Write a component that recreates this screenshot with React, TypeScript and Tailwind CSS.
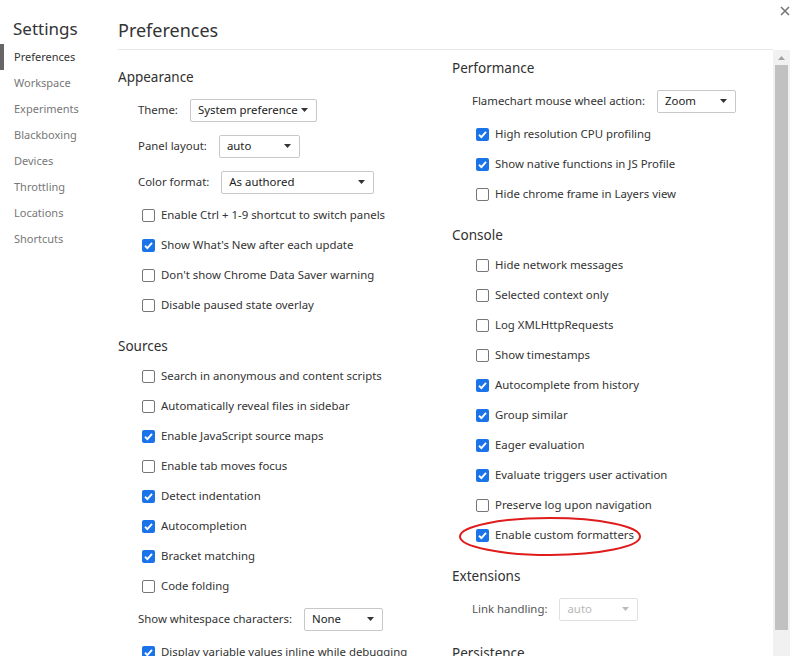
import { ReactNode } from 'react';

type Item =
  | { kind: 'check'; label: string; checked?: boolean }
  | { kind: 'select'; label: string; value: string; width: number; disabled?: boolean };

interface Section {
  title: string;
  items: Item[];
}

const leftColumn: Section[] = [
  {
    title: 'Appearance',
    items: [
      { kind: 'select', label: 'Theme:', value: 'System preference', width: 127 },
      { kind: 'select', label: 'Panel layout:', value: 'auto', width: 81 },
      { kind: 'select', label: 'Color format:', value: 'As authored', width: 153 },
      { kind: 'check', label: 'Enable Ctrl + 1-9 shortcut to switch panels' },
      { kind: 'check', label: "Show What's New after each update", checked: true },
      { kind: 'check', label: "Don't show Chrome Data Saver warning" },
      { kind: 'check', label: 'Disable paused state overlay' },
    ],
  },
  {
    title: 'Sources',
    items: [
      { kind: 'check', label: 'Search in anonymous and content scripts' },
      { kind: 'check', label: 'Automatically reveal files in sidebar' },
      { kind: 'check', label: 'Enable JavaScript source maps', checked: true },
      { kind: 'check', label: 'Enable tab moves focus' },
      { kind: 'check', label: 'Detect indentation', checked: true },
      { kind: 'check', label: 'Autocompletion', checked: true },
      { kind: 'check', label: 'Bracket matching', checked: true },
      { kind: 'check', label: 'Code folding' },
      { kind: 'select', label: 'Show whitespace characters:', value: 'None', width: 79 },
      { kind: 'check', label: 'Display variable values inline while debugging', checked: true },
    ],
  },
];

const rightColumn: Section[] = [
  {
    title: 'Performance',
    items: [
      { kind: 'select', label: 'Flamechart mouse wheel action:', value: 'Zoom', width: 79 },
      { kind: 'check', label: 'High resolution CPU profiling', checked: true },
      { kind: 'check', label: 'Show native functions in JS Profile', checked: true },
      { kind: 'check', label: 'Hide chrome frame in Layers view' },
    ],
  },
  {
    title: 'Console',
    items: [
      { kind: 'check', label: 'Hide network messages' },
      { kind: 'check', label: 'Selected context only' },
      { kind: 'check', label: 'Log XMLHttpRequests' },
      { kind: 'check', label: 'Show timestamps' },
      { kind: 'check', label: 'Autocomplete from history', checked: true },
      { kind: 'check', label: 'Group similar', checked: true },
      { kind: 'check', label: 'Eager evaluation', checked: true },
      { kind: 'check', label: 'Evaluate triggers user activation', checked: true },
      { kind: 'check', label: 'Preserve log upon navigation' },
      { kind: 'check', label: 'Enable custom formatters', checked: true },
    ],
  },
  {
    title: 'Extensions',
    items: [{ kind: 'select', label: 'Link handling:', value: 'auto', width: 79, disabled: true }],
  },
  { title: 'Persistence', items: [] },
];

const navItems = [
  'Preferences',
  'Workspace',
  'Experiments',
  'Blackboxing',
  'Devices',
  'Throttling',
  'Locations',
  'Shortcuts',
];

function Checkbox({ checked }: { checked?: boolean }) {
  if (checked) {
    return (
      <svg width="13" height="13" viewBox="0 0 13 13" className="shrink-0">
        <rect x="0" y="0" width="13" height="13" rx="2" fill="#1a73e8" />
        <path d="M3 6.8 L5.4 9.1 L10 3.9" stroke="#fff" strokeWidth="1.9" fill="none" />
      </svg>
    );
  }
  return <span className="h-[13px] w-[13px] shrink-0 rounded-[2px] border border-[#767676] bg-white" />;
}

function Select({ value, width, disabled }: { value: string; width: number; disabled?: boolean }) {
  return (
    <div
      className={`ml-[12px] flex h-[23px] shrink-0 items-center justify-between rounded-[2px] border pl-[7px] pr-[8px] ${
        disabled ? 'border-[#e0e0e0] text-[#b8b8b8]' : 'border-[#c8c8c8] text-[#222]'
      }`}
      style={{ width }}
    >
      <span className="whitespace-nowrap">{value}</span>
      <svg width="7" height="4" viewBox="0 0 7 4" className="shrink-0">
        <path d="M0 0 H7 L3.5 4 Z" fill={disabled ? '#bbb' : '#333'} />
      </svg>
    </div>
  );
}

function Row({ item }: { item: Item }) {
  if (item.kind === 'check') {
    return (
      <div className="flex h-[30px] items-center gap-[6px] pl-[24px]">
        <Checkbox checked={item.checked} />
        <span className="whitespace-nowrap">{item.label}</span>
      </div>
    );
  }
  return (
    <div className="flex h-[36px] items-center pl-[20px]">
      <span className={`whitespace-nowrap ${item.disabled ? 'text-[#555]' : ''}`}>{item.label}</span>
      <Select value={item.value} width={item.width} disabled={item.disabled} />
    </div>
  );
}

function Column({ sections, className }: { sections: Section[]; className: string }): ReactNode {
  return (
    <div className={`flex w-[334px] shrink-0 flex-col gap-[11px] ${className}`}>
      {sections.map((s) => (
        <div key={s.title} className="flex flex-col">
          <div className="flex h-[30px] items-center text-[13.5px] text-[#303030]">{s.title}</div>
          {s.items.map((it) => (
            <Row key={it.label} item={it} />
          ))}
        </div>
      ))}
    </div>
  );
}

export default function App() {
  return (
    <div
      className="relative flex h-[656px] w-[797px] overflow-hidden bg-white text-[11.4px] text-[#333]"
      style={{ fontFamily: '"Noto Sans", "Open Sans", sans-serif' }}
    >
      <aside className="flex w-[118px] shrink-0 flex-col">
        <div className="pl-[13px] pt-[16px] text-[17px] leading-[26px] text-[#333]">Settings</div>
        <nav className="mt-[2px] flex flex-col text-[11px]">
          {navItems.map((n, i) => (
            <div
              key={n}
              className={`flex h-[26px] items-center border-l-[4px] pl-[10px] ${
                i === 0 ? 'border-[#666] text-[#333]' : 'border-transparent text-[#777]'
              }`}
            >
              {n}
            </div>
          ))}
        </nav>
      </aside>

      <main className="flex min-w-0 flex-1 flex-col overflow-hidden">
        <div className="h-[50px] shrink-0 border-b border-[#e8e8e8] pt-[17px] text-[18px] leading-[26px] text-[#333]">
          Preferences
        </div>
        <div className="flex min-h-0 flex-1">
          <Column sections={leftColumn} className="pt-[12px]" />
          <Column sections={rightColumn} className="pt-[3px]" />
        </div>
      </main>

      <div className="flex w-[24px] shrink-0 flex-col">
        <div className="flex h-[50px] items-start justify-center pt-[6px]">
          <svg width="10" height="10" viewBox="0 0 10 10">
            <path d="M1 1 L9 9 M9 1 L1 9" stroke="#777" strokeWidth="1.6" />
          </svg>
        </div>
        <div className="mr-[7px] flex flex-1 flex-col bg-[#f1f1f1] px-[2px]">
          <div className="flex h-[15px] items-center justify-center">
            <svg width="7" height="4" viewBox="0 0 7 4">
              <path d="M0 4 H7 L3.5 0 Z" fill="#a3a3a3" />
            </svg>
          </div>
          <div className="h-[565px] bg-[#c1c1c1]" />
        </div>
      </div>

      <svg className="pointer-events-none absolute left-[458px] top-[516px]" width="186" height="42" viewBox="0 0 186 42">
        <ellipse cx="92" cy="20.5" rx="90" ry="18.5" fill="none" stroke="#e01b1b" strokeWidth="2" />
      </svg>
    </div>
  );
}
